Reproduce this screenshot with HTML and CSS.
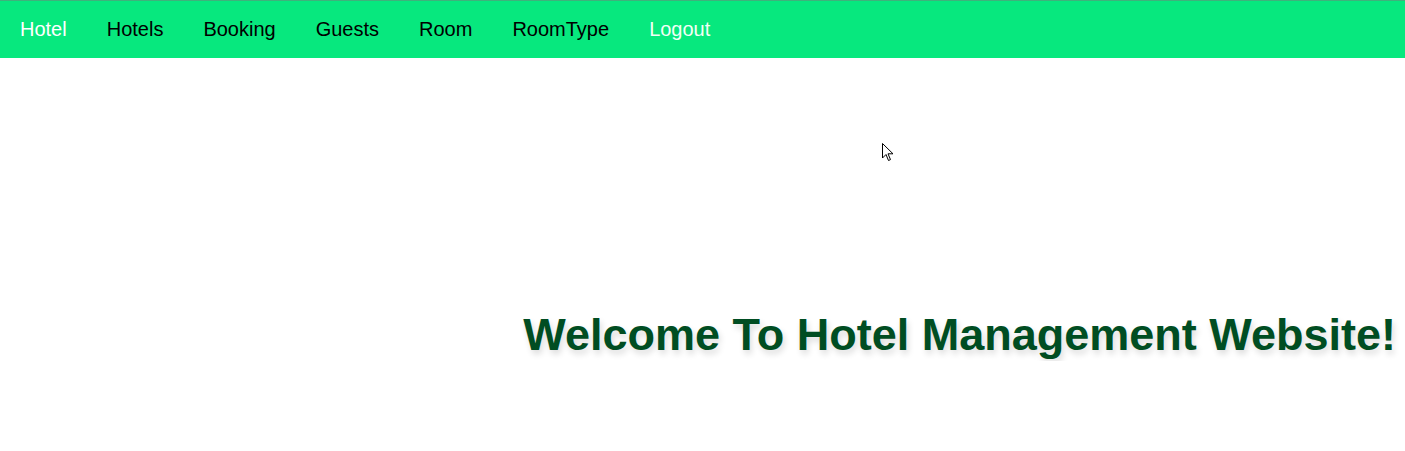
FILE: index.html
```html
<!DOCTYPE html>
<html lang="en">
<head>
<meta charset="utf-8">
<title>Hotel Management</title>
<link rel="stylesheet" href="styles.css">
</head>
<body>
<nav class="navbar">
  <a class="nav-link brand" href="#">Hotel</a>
  <a class="nav-link" href="#">Hotels</a>
  <a class="nav-link" href="#">Booking</a>
  <a class="nav-link" href="#">Guests</a>
  <a class="nav-link" href="#">Room</a>
  <a class="nav-link" href="#">RoomType</a>
  <a class="nav-link light" href="#">Logout</a>
</nav>
<main class="hero">
  <h1 class="welcome">Welcome To Hotel Management Website!</h1>
</main>
<svg class="cursor" width="12" height="19" viewBox="0 0 12 19"><path d="M0.5 0.5 L0.5 15 L4 11.5 L6.5 17.5 L8.5 16.6 L6 10.8 L11 10.8 Z" fill="#fff" stroke="#000" stroke-width="1"/></svg>
</body>
</html>
```
FILE: styles.css
```css
html, body {
  margin: 0;
  padding: 0;
  background: #ffffff;
  font-family: "Liberation Sans", Arial, sans-serif;
}
.navbar {
  display: flex;
  align-items: center;
  height: 57px;
  background: #07e87e;
  border-top: 1px solid #3fb27c;
}
.nav-link {
  font-size: 20px;
  color: #000;
  text-decoration: none;
  padding: 0 20px;
  line-height: 57px;
}
.nav-link.brand { color: #fff; }
.nav-link.light { color: #f2fff6; }
.hero {
  display: flex;
  justify-content: flex-end;
  padding: 251px 9px 0 0;
}
.welcome {
  margin: 0;
  font-size: 45px;
  font-weight: bold;
  color: #004d22;
  text-shadow: 2px 4px 6px rgba(0,0,0,0.14);
  line-height: 52px;
}
.cursor {
  position: absolute;
  left: 882px;
  top: 143px;
}
```
